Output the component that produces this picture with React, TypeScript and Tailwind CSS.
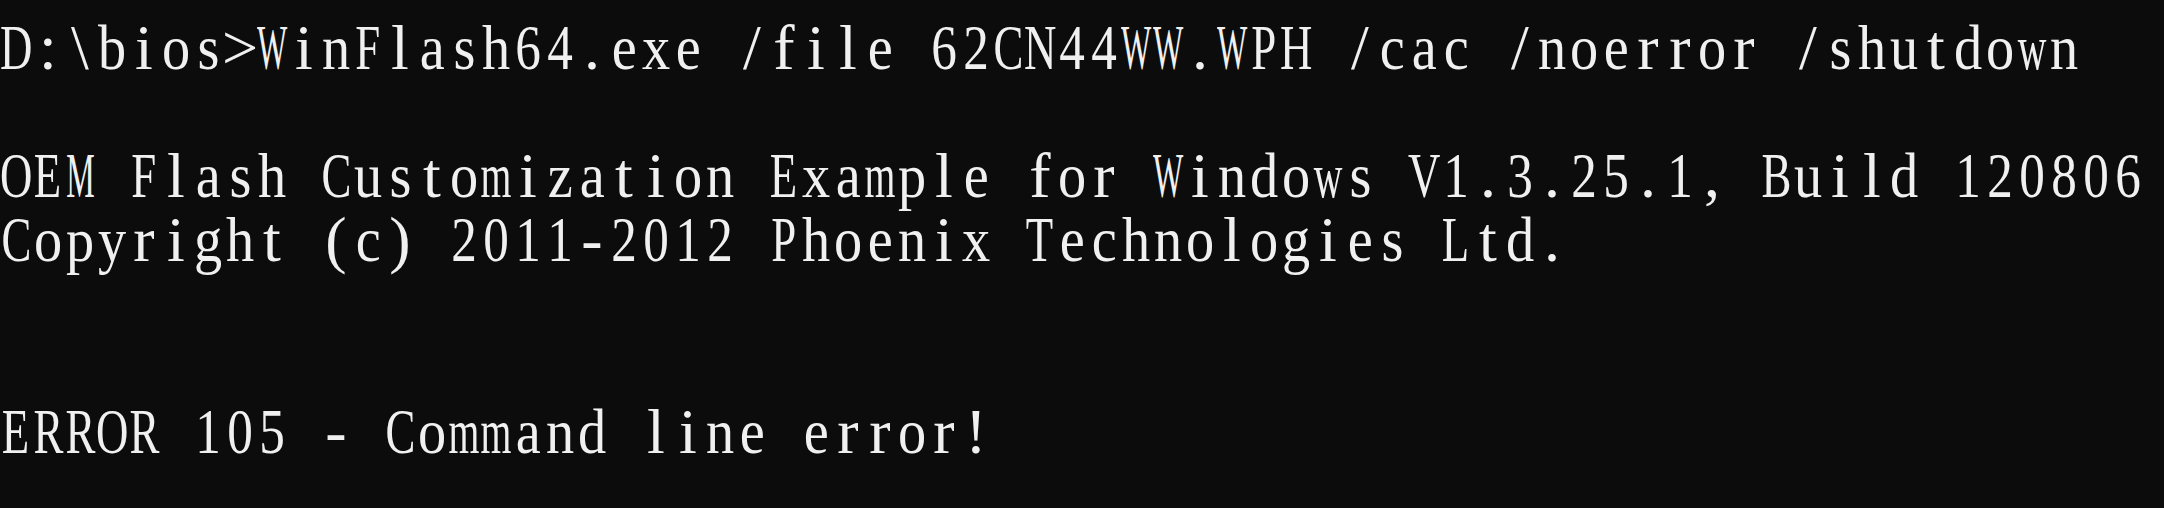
import React from 'react';

const lines = [
  'D:\\bios>WinFlash64.exe /file 62CN44WW.WPH /cac /noerror /shutdown',
  '',
  'OEM Flash Customization Example for Windows V1.3.25.1, Build 120806',
  'Copyright (c) 2011-2012 Phoenix Technologies Ltd.',
  '',
  '',
  'ERROR 105 - Command line error!',
];

// squeeze each serif glyph into a 32px console cell
const squeeze = (ch: string) => {
  if ('MW'.includes(ch)) return 'inline-block scale-x-[0.5]';
  if ('mw'.includes(ch)) return 'inline-block scale-x-[0.62]';
  if ('ilftjr'.includes(ch)) return 'inline-block';
  if (/[A-Z]/.test(ch)) return 'inline-block scale-x-[0.7]';
  if (/[0-9]/.test(ch)) return 'inline-block scale-x-[0.8]';
  if (/[a-z]/.test(ch)) return 'inline-block scale-x-[0.88]';
  return 'inline-block';
};

const Cell = ({ ch }: { ch: string }) => (
  <span className="inline-flex w-[32px] justify-center">
    <span className={squeeze(ch)}>{ch === ' ' ? '\u00a0' : ch}</span>
  </span>
);

const App = () => {
  return (
    <div className="w-[2164px] h-[508px] bg-[#0c0c0c] overflow-hidden">
      <div className="pt-[16px] font-['Liberation_Serif',serif] text-[64px] leading-[64px] text-[#f0f0f0] whitespace-pre">
        {lines.map((line, i) => (
          <div key={i} className="h-[64px] flex">
            {line.split('').map((ch, j) => (
              <Cell key={j} ch={ch} />
            ))}
          </div>
        ))}
      </div>
    </div>
  );
};

export default App;
